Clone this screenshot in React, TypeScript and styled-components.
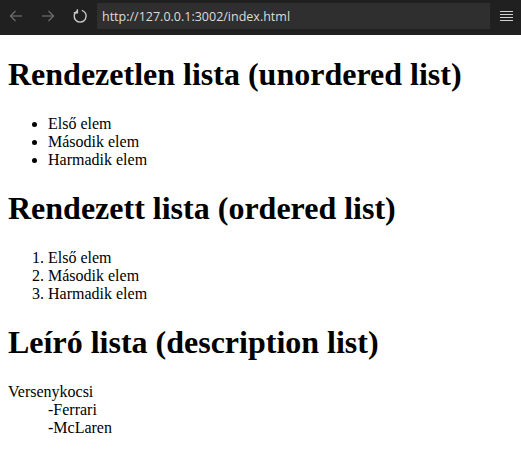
import React from "react";
import styled, { createGlobalStyle } from "styled-components";

const Global = createGlobalStyle`
  html, body { margin: 0; padding: 0; background: #fff; }
  body { font-family: "Liberation Serif", "Times New Roman", serif; font-size: 16px; color: #000; }
`;

const Toolbar = styled.div`
  height: 35px;
  background: #202020;
  display: flex;
  align-items: flex-start;
  box-sizing: border-box;
  padding-top: 3px;
`;

const NavGroup = styled.div`
  display: flex;
  width: 97px;
`;

const NavButton = styled.div<{ $dim?: boolean }>`
  width: 32px;
  height: 26px;
  display: flex;
  align-items: center;
  justify-content: center;
  color: ${p => (p.$dim ? "#6f6f6f" : "#c8c8c8")};
`;

const UrlField = styled.div`
  width: 393px;
  height: 26px;
  background: #2f2f2f;
  color: #dcdcdc;
  font-family: "Open Sans", "Noto Sans", sans-serif;
  font-size: 12.5px;
  display: flex;
  align-items: center;
  padding-left: 5px;
  box-sizing: border-box;
`;

const MenuButton = styled.div`
  flex: 1;
  height: 26px;
  display: flex;
  align-items: center;
  justify-content: center;
  padding-left: 2px;
`;

const Content = styled.div`
  margin: 8px;
`;

const H1 = styled.h1`
  font-size: 2em;
  font-weight: bold;
  margin: 0.67em 0;
`;

const UL = styled.ul`
  margin: 1em 0;
  padding-left: 40px;
`;

const OL = styled.ol`
  margin: 1em 0;
  padding-left: 40px;
`;

const DL = styled.dl`
  margin: 1em 0;
`;

const DD = styled.dd`
  margin-left: 40px;
`;

const Arrow = ({ dir }: { dir: "left" | "right" }) => (
  <svg width="14" height="14" viewBox="0 0 14 14" fill="none" stroke="currentColor" strokeWidth="1.2">
    {dir === "left" ? (
      <>
        <path d="M13 7H1.5" />
        <path d="M6.5 2L1.5 7l5 5" />
      </>
    ) : (
      <>
        <path d="M1 7h11.5" />
        <path d="M7.5 2l5 5-5 5" />
      </>
    )}
  </svg>
);

const Reload = () => (
  <svg width="16" height="16" viewBox="0 0 16 16" fill="none" stroke="currentColor" strokeWidth="1.4">
    <path d="M9.8 2.3A6 6 0 1 1 5 3" />
    <path d="M5.4 1.2v3.6H1.8" />
  </svg>
);

const Menu = () => (
  <svg width="13" height="12" viewBox="0 0 13 12" stroke="#d0d0d0" strokeWidth="1.2">
    <path d="M0 1.5h13M0 4.5h13M0 7.5h13M0 10.5h13" />
  </svg>
);

export default function App() {
  return (
    <>
      <Global />
      <Toolbar>
        <NavGroup>
          <NavButton $dim>
            <Arrow dir="left" />
          </NavButton>
          <NavButton $dim>
            <Arrow dir="right" />
          </NavButton>
          <NavButton>
            <Reload />
          </NavButton>
        </NavGroup>
        <UrlField>http://127.0.0.1:3002/index.html</UrlField>
        <MenuButton>
          <Menu />
        </MenuButton>
      </Toolbar>
      <Content>
        <H1>Rendezetlen lista (unordered list)</H1>
        <UL>
          <li>Első elem</li>
          <li>Második elem</li>
          <li>Harmadik elem</li>
        </UL>
        <H1>Rendezett lista (ordered list)</H1>
        <OL>
          <li>Első elem</li>
          <li>Második elem</li>
          <li>Harmadik elem</li>
        </OL>
        <H1>Leíró lista (description list)</H1>
        <DL>
          <dt>Versenykocsi</dt>
          <DD>-Ferrari</DD>
          <DD>-McLaren</DD>
        </DL>
      </Content>
    </>
  );
}
